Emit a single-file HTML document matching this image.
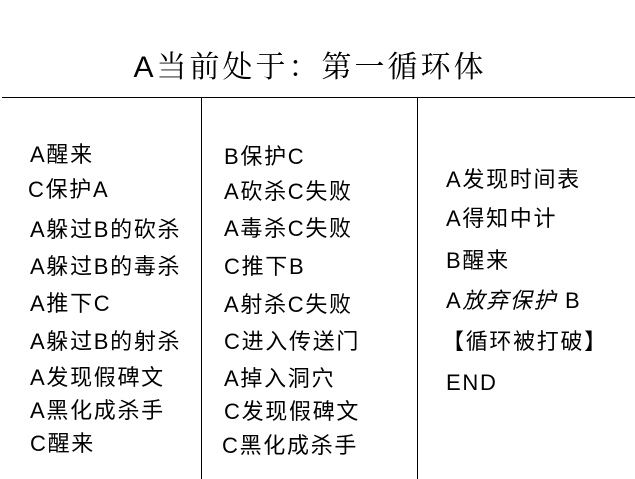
<html><head><style>
body{margin:0;width:635px;height:479px;background:#fff;position:relative;overflow:hidden;font-family:"Liberation Sans","Noto Sans CJK SC",sans-serif;color:#000}
.t{position:absolute;left:0;width:620px;text-align:center;top:42px;font-size:30px;font-family:"Liberation Sans","Noto Serif CJK SC",serif;letter-spacing:3px}
.h{position:absolute;left:2px;top:97px;width:633px;height:1px;background:#000}
.v{position:absolute;top:97px;width:1px;height:382px;background:#000}
.i{position:absolute;font-size:22px;line-height:26px;white-space:nowrap;letter-spacing:1.7px}
</style></head><body>
<div class="t">A当前处于：第一循环体</div>
<div class="h"></div><div class="v" style="left:201px"></div><div class="v" style="left:417px"></div>
<div class="i" style="left:30px;top:142px">A醒来</div>
<div class="i" style="left:28px;top:177px">C保护A</div>
<div class="i" style="left:30px;top:217px">A躲过B的砍杀</div>
<div class="i" style="left:30px;top:254px">A躲过B的毒杀</div>
<div class="i" style="left:30px;top:291px">A推下C</div>
<div class="i" style="left:30px;top:329px">A躲过B的射杀</div>
<div class="i" style="left:30px;top:365px">A发现假碑文</div>
<div class="i" style="left:30px;top:398px">A黑化成杀手</div>
<div class="i" style="left:30px;top:431px">C醒来</div>
<div class="i" style="left:224px;top:144px">B保护C</div>
<div class="i" style="left:224px;top:179px">A砍杀C失败</div>
<div class="i" style="left:224px;top:216px">A毒杀C失败</div>
<div class="i" style="left:224px;top:254px">C推下B</div>
<div class="i" style="left:224px;top:292px">A射杀C失败</div>
<div class="i" style="left:224px;top:329px">C进入传送门</div>
<div class="i" style="left:224px;top:366px">A掉入洞穴</div>
<div class="i" style="left:224px;top:399px">C发现假碑文</div>
<div class="i" style="left:222px;top:433px">C黑化成杀手</div>
<div class="i" style="left:446px;top:167px">A发现时间表</div>
<div class="i" style="left:446px;top:206px">A得知中计</div>
<div class="i" style="left:446px;top:248px">B醒来</div>
<div class="i" style="left:446px;top:288px">A<i>放弃保护</i> B</div>
<div class="i" style="left:442px;top:329px">【循环被打破】</div>
<div class="i" style="left:446px;top:370px">END</div>
</body></html>
